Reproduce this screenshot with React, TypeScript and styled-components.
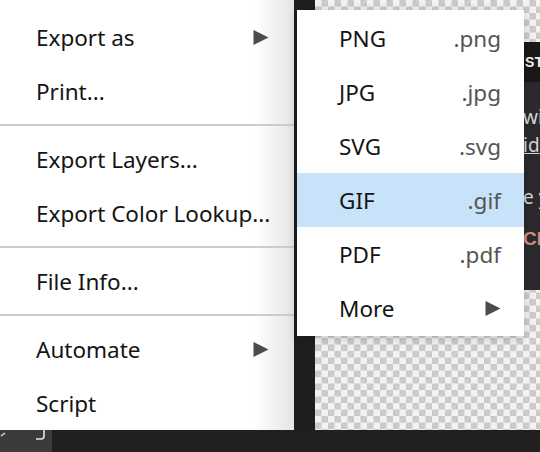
import styled, { createGlobalStyle } from 'styled-components';

const GlobalStyle = createGlobalStyle`
  html,
  body {
    margin: 0;
    padding: 0;
    background: #1e1e1e;
  }
  body {
    font-family: 'Noto Sans', 'Open Sans', sans-serif;
  }
`;

interface MenuEntry {
  label: string;
  hasChildren?: boolean;
}

const mainGroups: MenuEntry[][] = [
  [{ label: 'Export as', hasChildren: true }, { label: 'Print...' }],
  [{ label: 'Export Layers...' }, { label: 'Export Color Lookup...' }],
  [{ label: 'File Info...' }],
  [{ label: 'Automate', hasChildren: true }, { label: 'Script' }],
];

interface FormatEntry {
  name: string;
  ext?: string;
  active?: boolean;
}

const formats: FormatEntry[] = [
  { name: 'PNG', ext: '.png' },
  { name: 'JPG', ext: '.jpg' },
  { name: 'SVG', ext: '.svg' },
  { name: 'GIF', ext: '.gif', active: true },
  { name: 'PDF', ext: '.pdf' },
  { name: 'More' },
];

const Arrow = () => (
  <ArrowIcon viewBox="0 0 16 16" aria-hidden>
    <polygon points="0,0 16,8 0,16" />
  </ArrowIcon>
);

const App = () => {
  return (
    <>
      <GlobalStyle />
      <Screen>
        <Workspace>
          <Gutter />
          <Canvas>
            {/* the document behind the menus, only its right strip shows */}
            <PagePreview>
              <PageHeader>ST</PageHeader>
              <PageBody>
                <PageLine $top={22}>wi</PageLine>
                <PageLine $top={50} $underline>
                  id
                </PageLine>
                <PageLine $top={102}>e y</PageLine>
                <PageAccent>CE</PageAccent>
              </PageBody>
            </PagePreview>
          </Canvas>
        </Workspace>
        <StatusBar>
          <ToolBox>
            <svg width="52" height="22" viewBox="0 0 52 22" aria-hidden>
              <path d="M1 6 L5 3" stroke="#d8d8d8" strokeWidth="1.5" fill="none" />
              <path
                d="M44 0 L44 6 Q44 9 41 9 L36 9"
                stroke="#e6e6e6"
                strokeWidth="1.6"
                fill="none"
              />
            </svg>
          </ToolBox>
        </StatusBar>

        <MainMenu>
          {mainGroups.map((group, gi) => (
            <MenuGroup key={gi}>
              {gi > 0 && <Separator />}
              {group.map((entry) => (
                <MainItem key={entry.label}>
                  <ItemLabel>{entry.label}</ItemLabel>
                  {entry.hasChildren && <Arrow />}
                </MainItem>
              ))}
            </MenuGroup>
          ))}
        </MainMenu>

        <SubMenu>
          {formats.map((f) => (
            <SubItem key={f.name} $active={f.active}>
              <ItemLabel>{f.name}</ItemLabel>
              {f.ext ? <Extension>{f.ext}</Extension> : <Arrow />}
            </SubItem>
          ))}
        </SubMenu>
      </Screen>
    </>
  );
};

export default App;

const Screen = styled.div`
  position: relative;
  display: flex;
  flex-direction: column;
  width: 540px;
  height: 452px;
  overflow: hidden;
  background: #1e1e1e;
`;

const Workspace = styled.div`
  display: flex;
  flex-direction: row;
  height: 432px;
`;

const Gutter = styled.div`
  width: 315px;
  flex-shrink: 0;
  background: #1e1e1e;
`;

const Canvas = styled.div`
  position: relative;
  flex: 1;
  overflow: hidden;
  background-color: #f2f2f2;
  background-image: linear-gradient(45deg, #c9c9c9 25%, transparent 25%),
    linear-gradient(-45deg, #c9c9c9 25%, transparent 25%),
    linear-gradient(45deg, transparent 75%, #c9c9c9 75%),
    linear-gradient(-45deg, transparent 75%, #c9c9c9 75%);
  background-size: 13px 13px;
  background-position: 0 0, 0 6.5px, 6.5px -6.5px, -6.5px 0;
`;

const PagePreview = styled.div`
  position: absolute;
  left: 190px;
  top: 42px;
  right: 0;
  height: 248px;
  display: flex;
  flex-direction: column;
  background: #2a2a2c;
`;

const PageHeader = styled.div`
  height: 40px;
  padding-left: 20px;
  display: flex;
  align-items: center;
  background: #19191a;
  color: #f2f2f2;
  font-family: 'Liberation Sans', sans-serif;
  font-weight: 700;
  font-size: 14px;
  letter-spacing: 0.5px;
`;

const PageBody = styled.div`
  position: relative;
  flex: 1;
`;

const PageLine = styled.div<{ $top: number; $underline?: boolean }>`
  position: absolute;
  left: 18px;
  top: ${({ $top }) => $top}px;
  color: #d6d6d6;
  font-family: 'Noto Sans', sans-serif;
  font-size: 19px;
  line-height: 26px;
  white-space: nowrap;
  text-decoration: ${({ $underline }) => ($underline ? 'underline' : 'none')};
`;

const PageAccent = styled.div`
  position: absolute;
  left: 18px;
  top: 146px;
  color: #cf907c;
  font-family: 'Liberation Sans', sans-serif;
  font-weight: 700;
  font-size: 19px;
`;

const StatusBar = styled.div`
  display: flex;
  flex-direction: row;
  flex: 1;
  background: #202020;
`;

const ToolBox = styled.div`
  width: 52px;
  background: #3b3b3b;
  display: flex;
`;

const MainMenu = styled.nav`
  position: absolute;
  left: 0;
  top: 0;
  width: 294px;
  padding-top: 10px;
  background: linear-gradient(to right, #ffffff calc(100% - 40px), #e5e5e5);
`;

const MenuGroup = styled.div`
  display: flex;
  flex-direction: column;
`;

const Separator = styled.hr`
  margin: 6px 0;
  border: none;
  height: 2px;
  background: #cbcbcb;
`;

const MainItem = styled.div`
  display: flex;
  align-items: center;
  justify-content: space-between;
  height: 54px;
  padding: 0 25px 0 36px;
`;

const ItemLabel = styled.span`
  font-size: 22.5px;
  color: #141414;
  white-space: nowrap;
`;

const ArrowIcon = styled.svg`
  width: 16px;
  height: 15px;
  fill: #4b4b4b;
`;

const SubMenu = styled.div`
  position: absolute;
  left: 297px;
  top: 10px;
  width: 227px;
  padding: 1px 0;
  background: #ffffff;
  box-shadow: 0 2px 10px rgba(0, 0, 0, 0.18);
`;

const SubItem = styled.div<{ $active?: boolean }>`
  display: flex;
  align-items: center;
  justify-content: space-between;
  height: 54px;
  padding: 0 23px 0 42px;
  background: ${({ $active }) => ($active ? '#c7e2f9' : 'transparent')};
`;

const Extension = styled.span`
  font-size: 22.5px;
  color: #555555;
`;
